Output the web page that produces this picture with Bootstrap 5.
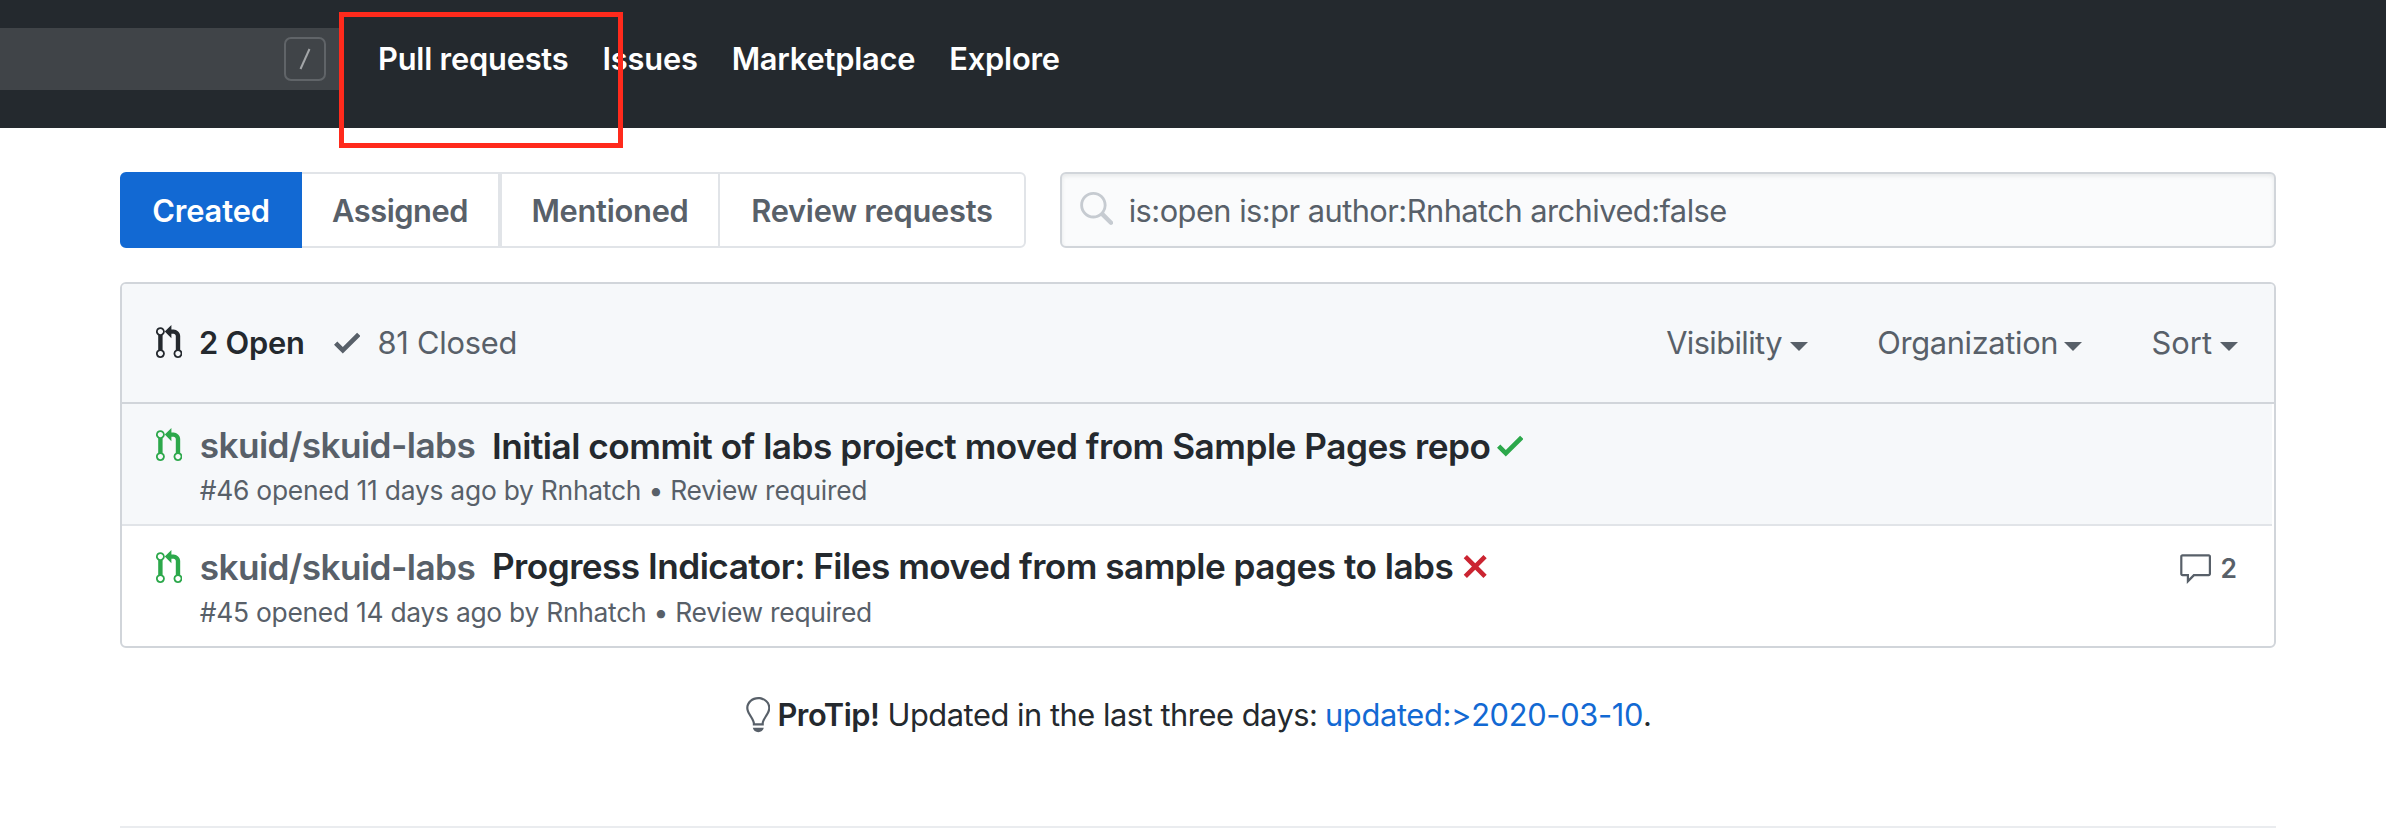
<!DOCTYPE html>
<html lang="en">
<head>
<meta charset="utf-8">
<meta name="viewport" content="width=device-width, initial-scale=1">
<title>Pull requests</title>
<link rel="stylesheet" href="https://cdn.jsdelivr.net/npm/bootstrap@5.3.0/dist/css/bootstrap.min.css">
<style>
  body { font-family: Inter, "Liberation Sans", sans-serif; font-size: 30.8px; line-height: 46px; color: #24292e; background: #fff; overflow: hidden; white-space: nowrap; }
  a { text-decoration: none; }
  b { font-weight: 600; }
  svg { display: block; flex: none; fill: currentColor; }
  .i12 { width: 26.4px; height: 35.2px; }
  .i16 { width: 35.2px; height: 35.2px; }

  /* Top bar */
  .topbar { height: 128px; background: #24292e; padding-top: 28px; }
  .site-search { width: 340px; height: 62px; background: #404448; padding-right: 14px; }
  .slash-key { width: 42px; height: 44px; border: 2px solid #606468; border-radius: 7px; }
  .slash-key svg { fill: none; stroke: #a3a6a8; stroke-width: 2; }
  .topnav { height: 62px; padding-left: 38px; gap: 34px; letter-spacing: -.2px; }
  .topnav a { color: #fff; font-weight: 600; }
  .highlight { left: 338.5px; top: 11.5px; width: 284px; height: 136px; border: 5px solid #ff2a1c; z-index: 2; }

  .page { margin: 44px 110px 0 120px; }

  /* Filter tabs */
  .tabs .btn { display: flex; align-items: center; justify-content: center; height: 76px; border: 2px solid #e1e4e8; border-radius: 0; color: #586069; font-size: inherit; font-weight: 600; line-height: 46px; padding: 2px 0 0; letter-spacing: -.25px; }
  .tabs .btn.active { width: 182px; background: #1269d3; border-color: #1269d3; color: #fff; border-radius: 6px 0 0 6px; letter-spacing: -.1px; }
  .tabs .assigned { width: 198px; border-left: 0; letter-spacing: -.45px; }
  .tabs .mentioned { width: 218px; border-right: 0; }
  .tabs .review { width: 308px; border-radius: 0 6px 6px 0; }
  .query { margin-left: 34px; height: 76px; border: 2px solid #d1d5da; border-radius: 6px; background: #fafbfc; box-shadow: inset 0 2px 4px rgba(27,31,35,.09); color: #586069; padding-left: 16px; letter-spacing: -.53px; }
  .query svg { color: #c6cbd1; margin-right: 15.5px; }
  .query span { padding-top: 1px; }

  /* Pull request list */
  .list { margin-top: 34px; border: 2px solid #d1d5da; border-radius: 6px; }
  .list-head { height: 120px; background: #f6f8fa; border-bottom: 2px solid #d1d5da; border-radius: 4px 4px 0 0; padding: 0 36px 0 34px; color: #586069; }
  .states b { color: #24292e; letter-spacing: -.2px; margin: 0 29px 0 16.6px; }
  .states span { margin-left: 17.5px; letter-spacing: -.25px; }
  .states svg:first-child { color: #24292e; }
  .tri { width: 0; height: 0; border: 9px solid transparent; border-top-color: currentColor; border-bottom: 0; margin: 6px 0 0 8px; }
  .menus { gap: 69.5px; }
  .menus .vis { letter-spacing: -.6px; }
  .menus .org { letter-spacing: -.35px; margin-right: -2px; }
  .pr { height: 122px; margin-right: 2px; padding: 19px 34px 0; }
  .pr:last-child { height: 120px; }
  .pr.hovered { background: #f6f8fa; border-bottom: 2px solid #e1e4e8; }
  .pr .state { margin-top: 5px; }
  .pr .body { margin-left: 17.4px; }
  .heading { font-size: 35.2px; line-height: 44px; height: 44px; font-weight: 600; }
  .heading svg { margin: 5px 0 0 6.6px; }
  .heading .bad { margin: 4px 0 0 8.5px; }
  .repo { color: #586069; letter-spacing: -.57px; margin-right: 16.7px; }
  .subject { letter-spacing: -.495px; line-height: 46px; }
  .hovered + .pr .subject { letter-spacing: -.53px; line-height: 42px; }
  .meta { font-size: 26.4px; line-height: 36px; color: #586069; margin-top: 5px; letter-spacing: -.24px; }
  .hovered + .pr .meta { letter-spacing: -.265px; }
  .ok { color: #2ca84b; }
  .bad { color: #cb2431; }
  .muted { color: #586069; }
  .comments { font-size: 26.4px; line-height: 36px; margin-top: 5px; margin-right: 1px; }
  .comments svg { margin: 2px 7px 0 0; }

  .protip { margin-top: 44px; height: 46px; }
  .protip b { letter-spacing: -.45px; margin: 0 8px 0 7px; }
  .protip .lead-in { letter-spacing: -.46px; }
  .protip a { color: #1269d3; letter-spacing: -.32px; margin-left: 7.5px; }
  .foot { margin: 88px 0 0; height: 2px; background: #eaecef; }
</style>
</head>
<body>
<svg class="d-none">
  <symbol id="pull" viewBox="0 0 12 16"><path fill-rule="evenodd" d="M11 11.28V5c-.03-.78-.34-1.47-.94-2.06C9.46 2.35 8.78 2.03 8 2H7V0L4 3l3 3V4h1c.27.02.48.11.69.31.21.2.3.42.31.69v6.28A1.993 1.993 0 0 0 10 15a1.993 1.993 0 0 0 1-3.72zm-1 2.92c-.66 0-1.2-.55-1.2-1.2 0-.65.55-1.2 1.2-1.2.65 0 1.2.55 1.2 1.2 0 .65-.55 1.2-1.2 1.2zM4 3c0-1.11-.89-2-2-2a1.993 1.993 0 0 0-1 3.72v6.56A1.993 1.993 0 0 0 2 15a1.993 1.993 0 0 0 1-3.72V4.72c.59-.34 1-.98 1-1.72zm-.8 10c0 .66-.55 1.2-1.2 1.2-.65 0-1.2-.55-1.2-1.2 0-.65.55-1.2 1.2-1.2.65 0 1.2.55 1.2 1.2zM2 4.2C1.34 4.2.8 3.65.8 3c0-.65.55-1.2 1.2-1.2.65 0 1.2.55 1.2 1.2 0 .65-.55 1.2-1.2 1.2z"/></symbol>
  <symbol id="check" viewBox="0 0 12 16"><path d="M12 5l-8 8-4-4 1.5-1.5L4 10l6.5-6.5L12 5z"/></symbol>
  <symbol id="cross" viewBox="0 0 12 16"><path d="M7.48 8l3.75 3.75-1.48 1.48L6 9.48l-3.75 3.75-1.48-1.48L4.52 8 .77 4.25l1.48-1.48L6 6.52l3.75-3.75 1.48 1.48L7.48 8z"/></symbol>
  <symbol id="comment" viewBox="0 0 16 16"><path fill-rule="evenodd" d="M14 1H2c-.55 0-1 .45-1 1v8c0 .55.45 1 1 1h2v3.5L7.5 11H14c.55 0 1-.45 1-1V2c0-.55-.45-1-1-1zm0 9H7l-2 2v-2H2V2h12v8z"/></symbol>
</svg>

<header class="topbar d-flex">
  <div class="site-search d-flex align-items-center justify-content-end">
    <div class="slash-key d-flex align-items-center justify-content-center"><svg width="12" height="22" viewBox="0 0 12 22"><path d="M10.5 1L1.5 21"/></svg></div>
  </div>
  <nav class="topnav nav flex-nowrap align-items-center">
    <a href="#">Pull requests</a>
    <a href="#">Issues</a>
    <a href="#">Marketplace</a>
    <a href="#">Explore</a>
  </nav>
</header>
<div class="highlight position-absolute"></div>

<main class="page">
  <div class="d-flex">
    <div class="tabs d-flex">
      <a href="#" class="btn active">Created</a>
      <a href="#" class="btn assigned">Assigned</a>
      <a href="#" class="btn mentioned">Mentioned</a>
      <a href="#" class="btn review">Review requests</a>
    </div>
    <div class="query flex-fill d-flex align-items-center">
      <svg class="i16" viewBox="0 0 16 16"><path fill-rule="evenodd" d="M15.7 13.3l-3.81-3.83A5.93 5.93 0 0 0 13 6c0-3.31-2.69-6-6-6S1 2.69 1 6s2.69 6 6 6c1.3 0 2.48-.41 3.47-1.11l3.83 3.81c.19.2.45.3.7.3.25 0 .52-.09.7-.3a.996.996 0 0 0 0-1.41v.01zM7 10.7c-2.59 0-4.7-2.11-4.7-4.7 0-2.59 2.11-4.7 4.7-4.7 2.59 0 4.7 2.11 4.7 4.7 0 2.59-2.11 4.7-4.7 4.7z"/></svg>
      <span>is:open is:pr author:Rnhatch archived:false</span>
    </div>
  </div>

  <div class="list">
    <div class="list-head d-flex align-items-center justify-content-between">
      <div class="states d-flex align-items-center">
        <svg class="i12"><use href="#pull"/></svg><b>2 Open</b>
        <svg class="i12"><use href="#check"/></svg><span>81 Closed</span>
      </div>
      <div class="menus d-flex">
        <div class="d-flex align-items-center"><span class="vis">Visibility</span><i class="tri"></i></div>
        <div class="d-flex align-items-center"><span class="org">Organization</span><i class="tri"></i></div>
        <div class="d-flex align-items-center"><span>Sort</span><i class="tri"></i></div>
      </div>
    </div>

    <div class="pr hovered d-flex">
      <svg class="i12 ok state"><use href="#pull"/></svg>
      <div class="body">
        <div class="heading d-flex align-items-start"><span class="repo">skuid/skuid-labs</span><span class="subject">Initial commit of labs project moved from Sample Pages repo</span><svg class="i12 ok"><use href="#check"/></svg></div>
        <div class="meta">#46 opened 11 days ago by Rnhatch • Review required</div>
      </div>
    </div>

    <div class="pr d-flex">
      <svg class="i12 ok state"><use href="#pull"/></svg>
      <div class="body flex-fill">
        <div class="heading d-flex align-items-start"><span class="repo">skuid/skuid-labs</span><span class="subject">Progress Indicator: Files moved from sample pages to labs</span><svg class="i12 bad"><use href="#cross"/></svg></div>
        <div class="meta">#45 opened 14 days ago by Rnhatch • Review required</div>
      </div>
      <div class="comments d-flex muted"><svg class="i16"><use href="#comment"/></svg><b>2</b></div>
    </div>
  </div>

  <div class="protip d-flex align-items-center justify-content-center">
    <svg class="i12 muted" viewBox="0 0 12 16"><path fill-rule="evenodd" d="M6.5 0C3.48 0 1 2.19 1 5c0 .92.55 2.25 1 3 1.34 2.25 1.78 2.78 2 4v1h5v-1c.22-1.22.66-1.75 2-4 .45-.75 1-2.08 1-3 0-2.81-2.48-5-5.5-5zm3.64 7.48c-.25.44-.47.8-.67 1.11-.86 1.41-1.25 2.06-1.45 3.23-.02.05-.02.11-.02.17H5c0-.06 0-.13-.02-.17-.2-1.17-.59-1.83-1.45-3.23-.2-.31-.42-.67-.67-1.11C2.44 6.78 2 5.65 2 5c0-2.2 2.02-4 4.5-4 1.22 0 2.36.42 3.22 1.19C10.55 2.94 11 3.94 11 5c0 .66-.44 1.78-.86 2.48zM4 14h5c-.23 1.14-1.3 2-2.5 2s-2.27-.86-2.5-2z"/></svg>
    <b>ProTip!</b><span class="lead-in">Updated in the last three days:</span><a href="#">updated:&gt;2020-03-10</a><span>.</span>
  </div>
  <hr class="foot border-0 opacity-100">
</main>
<script src="https://cdn.jsdelivr.net/npm/bootstrap@5.3.0/dist/js/bootstrap.bundle.min.js"></script>
</body>
</html>
